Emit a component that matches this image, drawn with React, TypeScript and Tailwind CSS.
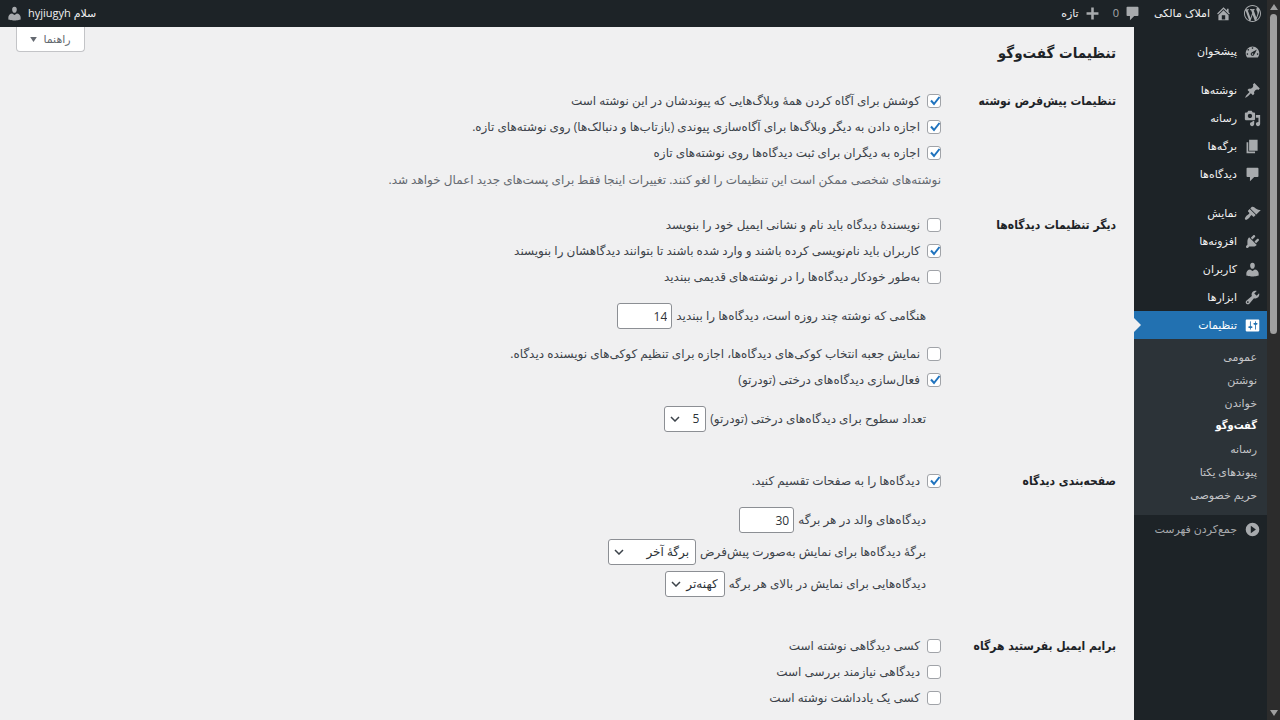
import { useId } from "react";
import type { ReactNode } from "react";

const icons = {
  wordpress:
    "M20 10c0-5.51-4.49-10-10-10C4.48 0 0 4.49 0 10c0 5.52 4.48 10 10 10 5.51 0 10-4.48 10-10zM7.78 15.37L4.37 6.22c.55-.02 1.17-.08 1.17-.08.5-.06.44-1.13-.06-1.11 0 0-1.45.11-2.37.11-.18 0-.37 0-.58-.01C4.12 2.69 6.87 1.11 10 1.11c2.33 0 4.45.87 6.05 2.34-.68-.11-1.65.39-1.65 1.58 0 .74.45 1.36.9 2.1.35.61.55 1.36.55 2.46 0 1.49-1.4 5-1.4 5l-3.03-8.37c.54-.02.82-.17.82-.17.5-.05.44-1.25-.06-1.22 0 0-1.44.12-2.38.12-.87 0-2.33-.12-2.33-.12-.5-.03-.56 1.2-.06 1.22l.92.08 1.26 3.41zM17.41 10c.24-.64.74-1.87.43-4.25.7 1.29 1.05 2.71 1.05 4.25 0 3.29-1.73 6.24-4.4 7.78.97-2.59 1.94-5.2 2.92-7.78zM6.1 18.09C3.12 16.65 1.11 13.53 1.11 10c0-1.3.23-2.48.72-3.59C3.25 10.3 4.67 14.2 6.1 18.09zm4.03-6.63l2.58 6.98c-.86.29-1.76.45-2.71.45-.79 0-1.57-.11-2.29-.33.81-2.38 1.62-4.74 2.42-7.1z",
  home: "M16 8.5l1.53 1.53-1.06 1.06L10 4.6l-6.47 6.49-1.06-1.06L10 2.5l4 4v-2h2v4zm-6-2.46l6 5.99V18H4v-5.97zM12 17v-5H8v5h4z",
  plus: "M17 8.5v3h-5.5V17h-3v-5.5H3v-3h5.5V3h3v5.5z",
  dashboard:
    "M3.76 17h12.48c1.1-1.37 1.76-3.11 1.76-5 0-4.42-3.58-8-8-8s-8 3.58-8 8c0 1.89.66 3.63 1.76 5zM9 6c0-.55.45-1 1-1s1 .45 1 1c0 .56-.45 1-1 1s-1-.44-1-1zM4 8c0-.55.45-1 1-1s1 .45 1 1c0 .56-.45 1-1 1s-1-.44-1-1zm4.52 3.4c.84-.83 6.51-3.5 6.51-3.5s-2.66 5.68-3.49 6.51c-.84.84-2.18.84-3.02 0-.83-.83-.83-2.18 0-3.01zM3 13c0-.55.45-1 1-1s1 .45 1 1c0 .56-.45 1-1 1s-1-.44-1-1zm6 0c0 .55.45 1 1 1s1-.45 1-1c0-.56-.45-1-1-1s-1 .44-1 1zm6 0c0-.55.45-1 1-1s1 .45 1 1c0 .56-.45 1-1 1s-1-.44-1-1z",
  post: "M10.44 3.02l1.82-1.82 6.36 6.35-1.83 1.82c-1.05-.68-2.48-.57-3.41.36l-.75.75c-.92.93-1.04 2.35-.35 3.41l-1.83 1.82-2.41-2.41-2.8 2.79c-.42.42-3.38 2.71-3.8 2.29s1.86-3.39 2.28-3.81l2.79-2.79L4.1 9.36l1.83-1.82c1.05.69 2.48.57 3.4-.36l.75-.75c.93-.92 1.05-2.35.36-3.41z",
  media:
    "M13 11V4c0-.55-.45-1-1-1h-1.67L9 1H5L3.67 3H2c-.55 0-1 .45-1 1v7c0 .55.45 1 1 1h10c.55 0 1-.45 1-1zM7 4.5c1.38 0 2.5 1.12 2.5 2.5S8.38 9.5 7 9.5 4.5 8.38 4.5 7 5.62 4.5 7 4.5zM14 6h5v10.5c0 1.38-1.12 2.5-2.5 2.5S14 17.88 14 16.5s1.12-2.5 2.5-2.5c.17 0 .34.02.5.05V9h-3V6zm-4 8.05V13h2v3.5c0 1.38-1.12 2.5-2.5 2.5S7 17.88 7 16.5 8.12 14 9.5 14c.17 0 .34.02.5.05z",
  page: "M6 15V2h10v13H6zm-1 1h8v2H3V5h2v11z",
  comments:
    "M4 2h12c.6 0 1 .4 1 1v9c0 .6-.4 1-1 1h-4l-5 5v-5H4c-.6 0-1-.4-1-1V3c0-.6.4-1 1-1z",
  appearance:
    "M14.48 11.06L7.41 3.99l1.5-1.5c.5-.56 2.3-.47 3.51.32 1.21.8 1.43 1.28 2.91 2.1 1.18.64 2.45 1.26 4.45.85zm-.71.71L6.7 4.7 4.93 6.47c-.39.39-.39 1.02 0 1.41l1.06 1.06c.39.39.39 1.03 0 1.42-.6.6-1.43 1.11-2.21 1.69-.35.26-.7.53-1.01.84C1.43 14.23.4 16.08 1.4 17.07c.99 1 2.84-.03 4.18-1.36.31-.31.58-.66.85-1.02.57-.78 1.08-1.61 1.69-2.21.39-.39 1.02-.39 1.41 0l1.06 1.06c.39.39 1.02.39 1.41 0z",
  plugins:
    "M13.11 4.36L9.87 7.6 8 5.73l3.24-3.24c.35-.34 1.05-.2 1.56.32.52.51.66 1.21.31 1.55zm-8 1.77l.91-1.12 9.01 9.01-1.19.84c-.71.71-2.63 1.16-3.82 1.16H6.14L4.9 17.26c-.59.59-1.54.59-2.12 0-.59-.58-.59-1.53 0-2.12l1.24-1.24v-3.88c0-1.13.4-3.19 1.09-3.89zm7.26 3.97l3.24-3.24c.34-.35 1.04-.21 1.55.31.52.51.66 1.21.31 1.55l-3.24 3.25z",
  users:
    "M10 9.25c-2.27 0-2.73-3.44-2.73-3.44C7 4.02 7.82 2 9.97 2c2.16 0 2.98 2.02 2.71 3.81 0 0-.41 3.44-2.68 3.44zm0 2.57L12.72 10c2.39 0 4.52 2.33 4.52 4.53v2.49s-3.65 1.13-7.24 1.13c-3.65 0-7.24-1.13-7.24-1.13v-2.49c0-2.25 1.94-4.48 4.47-4.48z",
  tools:
    "M16.68 9.77c-1.34 1.34-3.3 1.67-4.95.99l-5.41 6.52c-.99.99-2.59.99-3.58 0s-.99-2.59 0-3.57l6.52-5.42c-.68-1.65-.35-3.61.99-4.95 1.28-1.28 3.12-1.62 4.72-1.06l-2.89 2.89 2.82 2.82 2.86-2.87c.53 1.58.18 3.39-1.08 4.65zM3.81 16.21c.4.39 1.04.39 1.43 0 .4-.4.4-1.04 0-1.43-.39-.4-1.03-.4-1.43 0-.39.39-.39 1.03 0 1.43z",
  settings:
    "M18 16V4c0-.55-.45-1-1-1H3c-.55 0-1 .45-1 1v12c0 .55.45 1 1 1h14c.55 0 1-.45 1-1zM8 11h1c.55 0 1 .45 1 1s-.45 1-1 1H8v1.5c0 .28-.22.5-.5.5s-.5-.22-.5-.5V13H6c-.55 0-1-.45-1-1s.45-1 1-1h1V5.5c0-.28.22-.5.5-.5s.5.22.5.5V11zm5-2h-1c-.55 0-1-.45-1-1s.45-1 1-1h1V5.5c0-.28.22-.5.5-.5s.5.22.5.5V7h1c.55 0 1 .45 1 1s-.45 1-1 1h-1v5.5c0 .28-.22.5-.5.5s-.5-.22-.5-.5V9z",
  collapse: "M10 2a8 8 0 1 0 0 16 8 8 0 0 0 0-16zM8 5.5l6 4.5-6 4.5z",
};

type IconName = keyof typeof icons;

const Icon = ({ name, className = "" }: { name: IconName; className?: string }) => (
  <svg
    viewBox="0 0 20 20"
    fill="currentColor"
    fillRule="evenodd"
    aria-hidden="true"
    className={`size-[17px] shrink-0 ${className}`}
  >
    <path d={icons[name]} />
  </svg>
);

const menuGroups: { label: string; icon: IconName; active?: boolean }[][] = [
  [{ label: "پیشخوان", icon: "dashboard" }],
  [
    { label: "نوشته‌ها", icon: "post" },
    { label: "رسانه", icon: "media" },
    { label: "برگه‌ها", icon: "page" },
    { label: "دیدگاه‌ها", icon: "comments" },
  ],
  [
    { label: "نمایش", icon: "appearance" },
    { label: "افزونه‌ها", icon: "plugins" },
    { label: "کاربران", icon: "users" },
    { label: "ابزارها", icon: "tools" },
    { label: "تنظیمات", icon: "settings", active: true },
  ],
];

const subMenu = ["عمومی", "نوشتن", "خواندن", "گفت‌وگو", "رسانه", "پیوندهای یکتا", "حریم خصوصی"];

export default function App() {
  return (
    <div
      dir="rtl"
      lang="fa"
      className="flex h-screen overflow-hidden bg-[#f0f0f1] font-['Open_Sans','DejaVu_Sans',sans-serif] text-[12px] text-[#3c434a]"
    >
      <ScrollBar />
      <div className="flex min-w-0 flex-1 flex-col">
        <AdminBar />
        <div className="flex min-h-0 flex-1">
          <SideMenu />
          <SettingsPage />
        </div>
      </div>
    </div>
  );
}

const ScrollBar = () => (
  <div aria-hidden="true" className="flex w-[13px] shrink-0 flex-col items-center bg-[#2c2c2c] py-1">
    <svg viewBox="0 0 8 6" className="h-[6px] w-2 fill-[#9f9f9f]">
      <path d="M4 0l4 6H0z" />
    </svg>
    <div className="mt-1 h-[320px] w-[7px] rounded-full bg-[#9f9f9f]" />
    <svg viewBox="0 0 8 6" className="mt-auto h-[6px] w-2 fill-[#9f9f9f]">
      <path d="M0 0h8L4 6z" />
    </svg>
  </div>
);

const AdminBar = () => (
  <header className="flex h-[27px] shrink-0 items-center bg-[#1d2327] px-[6px] text-[11px] text-[#f0f0f1]">
    <a href="#about" aria-label="WordPress" className="text-[#a7aaad]">
      <Icon name="wordpress" />
    </a>
    <a href="#site" className="mr-3 flex items-center gap-[5px]">
      <Icon name="home" className="text-[#a7aaad]" />
      املاک مالکی
    </a>
    <a href="#comments" className="mr-[13px] flex items-center gap-[5px] text-[#a7aaad]">
      <Icon name="comments" />
      0
    </a>
    <a href="#new" className="mr-3 flex items-center gap-[5px]">
      <Icon name="plus" className="text-[#a7aaad]" />
      تازه
    </a>
    <a href="#profile" className="mr-auto flex items-center gap-[5px]">
      سلام hyjiugyh
      <Icon name="users" className="text-[#a7aaad]" />
    </a>
  </header>
);

const SideMenu = () => (
  <nav className="flex w-[133px] shrink-0 flex-col bg-[#1d2327] pt-[10px] text-[11px] text-[#f0f0f1]">
    <div className="flex flex-col gap-[11px]">
      {menuGroups.map((group, i) => (
        <ul key={i}>
          {group.map((item) => (
            <li key={item.label}>
              <a
                href="#menu"
                className={`relative flex h-7 items-center gap-[7px] pr-[6px] ${item.active ? "bg-[#2271b1] text-white" : ""}`}
              >
                <Icon name={item.icon} className={item.active ? "" : "text-[#a7aaad]"} />
                {item.label}
                {item.active && (
                  <span className="absolute top-[7px] left-0 border-y-[7px] border-l-[7px] border-y-transparent border-l-[#f0f0f1]" />
                )}
              </a>
            </li>
          ))}
        </ul>
      ))}
    </div>
    <ul className="bg-[#2c3338] pt-[7px] pb-2 text-[#c3c4c7]">
      {subMenu.map((label) => (
        <li key={label}>
          <a
            href="#submenu"
            className={`flex h-[23px] items-center pr-[10px] ${label === "گفت‌وگو" ? "font-['DejaVu_Sans_Condensed','DejaVu_Sans',sans-serif] font-bold text-white" : ""}`}
          >
            {label}
          </a>
        </li>
      ))}
    </ul>
    <button type="button" className="flex h-7 items-center gap-[7px] pr-[6px] text-[#a7aaad]">
      <Icon name="collapse" />
      جمع‌کردن فهرست
    </button>
  </nav>
);

const SettingsPage = () => (
  <main className="relative min-w-0 flex-1 overflow-y-auto pr-[18px] [scrollbar-width:none]">
    <button
      type="button"
      className="absolute top-0 left-4 flex h-[25px] w-[69px] items-center justify-center gap-[6px] rounded-b border border-t-0 border-[#c3c4c7] bg-white text-[11px] text-[#646970]"
    >
      راهنما
      <svg viewBox="0 0 8 6" aria-hidden="true" className="h-[5px] w-[7px] fill-current">
        <path d="M0 0h8L4 6z" />
      </svg>
    </button>

    <h1 className="pt-[14px] font-['DejaVu_Sans_Condensed','DejaVu_Sans',sans-serif] text-[15px] leading-6 font-bold text-[#1d2327]">
      تنظیمات گفت‌وگو
    </h1>

    <form className="mt-[23px] flex flex-col gap-6">
      <Section title="تنظیمات پیش‌فرض نوشته">
        <Check checked>کوشش برای آگاه کردن همهٔ وبلاگ‌هایی که پیوندشان در این نوشته است</Check>
        <Check checked>اجازه دادن به دیگر وبلاگ‌ها برای آگاه‌سازی پیوندی (بازتاب‌ها و دنبالک‌ها) روی نوشته‌های تازه.</Check>
        <Check checked>اجازه به دیگران برای ثبت دیدگاه‌ها روی نوشته‌های تازه</Check>
        <p className="mt-[6px] leading-4 text-[#646970]">
          نوشته‌های شخصی ممکن است این تنظیمات را لغو کنند. تغییرات اینجا فقط برای پست‌های جدید اعمال خواهد شد.
        </p>
      </Section>

      <Section title="دیگر تنظیمات دیدگاه‌ها">
        <Check>نویسندهٔ دیدگاه باید نام و نشانی ایمیل خود را بنویسد</Check>
        <Check checked>کاربران باید نام‌نویسی کرده باشند و وارد شده باشند تا بتوانند دیدگاهشان را بنویسند</Check>
        <Check>به‌طور خودکار دیدگاه‌ها را در نوشته‌های قدیمی ببندید</Check>
        <SubFields>
          <NumberField label="هنگامی که نوشته چند روزه است، دیدگاه‌ها را ببندید" value={14} />
        </SubFields>
        <Check>نمایش جعبه انتخاب کوکی‌های دیدگاه‌ها، اجازه برای تنظیم کوکی‌های نویسنده دیدگاه.</Check>
        <Check checked>فعال‌سازی دیدگاه‌های درختی (تودرتو)</Check>
        <SubFields>
          <SelectField label="تعداد سطوح برای دیدگاه‌های درختی (تودرتو)" options={["5", "6", "7"]} width="w-[42px]" />
        </SubFields>
      </Section>

      <Section title="صفحه‌بندی دیدگاه">
        <Check checked>دیدگاه‌ها را به صفحات تقسیم کنید.</Check>
        <SubFields>
          <NumberField label="دیدگاه‌های والد در هر برگه" value={30} />
          <SelectField label="برگهٔ دیدگاه‌ها برای نمایش به‌صورت پیش‌فرض" options={["برگهٔ آخر", "برگهٔ نخست"]} width="w-[88px]" />
          <SelectField label="دیدگاه‌هایی برای نمایش در بالای هر برگه" options={["کهنه‌تر", "تازه‌تر"]} width="w-[60px]" />
        </SubFields>
      </Section>

      <Section title="برایم ایمیل بفرستید هرگاه">
        <Check>کسی دیدگاهی نوشته است</Check>
        <Check>دیدگاهی نیازمند بررسی است</Check>
        <Check>کسی یک یادداشت نوشته است</Check>
      </Section>
    </form>
  </main>
);

const Section = ({ title, children }: { title: string; children: ReactNode }) => (
  <section className="flex">
    <h2 className="w-[175px] shrink-0 font-['DejaVu_Sans_Condensed','DejaVu_Sans',sans-serif] leading-[26px] font-bold text-[#1d2327]">
      {title}
    </h2>
    <div className="min-w-0 flex-1">{children}</div>
  </section>
);

const Check = ({ checked, children }: { checked?: boolean; children: ReactNode }) => (
  <label className="flex h-[26px] items-center gap-[7px]">
    <span className="grid shrink-0">
      <input
        type="checkbox"
        defaultChecked={checked}
        className="peer col-start-1 row-start-1 size-[14px] appearance-none rounded-[3px] border border-[#a0a3a8] bg-white"
      />
      <svg
        viewBox="0 0 14 14"
        aria-hidden="true"
        className="pointer-events-none invisible col-start-1 row-start-1 size-[14px] fill-none stroke-[#1f73be] stroke-2 peer-checked:visible"
      >
        <path d="M4 6.5L7 10l5.5-7" />
      </svg>
    </span>
    <span>{children}</span>
  </label>
);

const SubFields = ({ children }: { children: ReactNode }) => (
  <div className="mt-[13px] mb-3 flex flex-col gap-[6px] pr-[15px]">{children}</div>
);

const NumberField = ({ label, value }: { label: string; value: number }) => {
  const id = useId();
  return (
    <div className="flex h-[26px] items-center gap-1">
      <label htmlFor={id}>{label}</label>
      <input
        id={id}
        type="text"
        inputMode="numeric"
        defaultValue={value}
        className="h-[26px] w-[55px] rounded-[3px] border border-[#8c8f94] bg-white px-1 text-[#2c3338]"
      />
    </div>
  );
};

const SelectField = ({ label, options, width }: { label: string; options: string[]; width: string }) => {
  const id = useId();
  return (
    <div className="flex h-[26px] items-center gap-1">
      <label htmlFor={id}>{label}</label>
      <span className="relative">
        <select
          id={id}
          className={`h-[26px] appearance-none rounded-[3px] border border-[#8c8f94] bg-white pr-[6px] text-[#2c3338] ${width}`}
        >
          {options.map((option) => (
            <option key={option}>{option}</option>
          ))}
        </select>
        <svg
          viewBox="0 0 10 6"
          aria-hidden="true"
          className="pointer-events-none absolute top-[10px] left-[6px] h-[6px] w-[10px] fill-none stroke-[#3c434a] stroke-[1.5]"
        >
          <path d="M1 1l4 4 4-4" />
        </svg>
      </span>
    </div>
  );
};
